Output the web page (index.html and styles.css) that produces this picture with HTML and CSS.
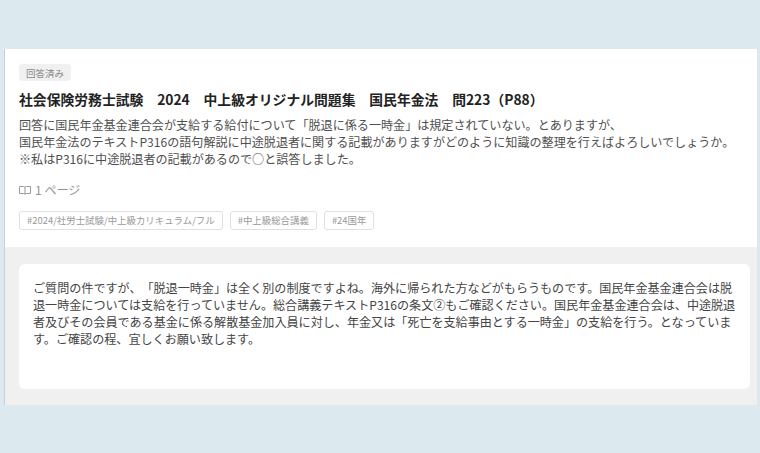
FILE: index.html
```html
<!DOCTYPE html>
<html lang="ja">
<head>
<meta charset="utf-8">
<title>質問</title>
<link rel="stylesheet" href="styles.css">
</head>
<body>
<main class="panel">
  <section class="question">
    <span class="status">回答済み</span>
    <h1 class="title">社会保険労務士試験　2024　中上級オリジナル問題集　国民年金法　問223（P88）</h1>
    <p class="body">回答に国民年金基金連合会が支給する給付について「脱退に係る一時金」は規定されていない。とありますが、<br>国民年金法のテキストP316の語句解説に中途脱退者に関する記載がありますがどのように知識の整理を行えばよろしいでしょうか。<br>※私はP316に中途脱退者の記載があるので○と誤答しました。</p>
    <div class="page">
      <svg class="book" width="12" height="10" viewBox="0 0 12 10" aria-hidden="true"><path d="M.5 1.500h4c.8 0 1.500.4 1.500 1 0-.6.7-1 1.500-1h4v7h-4c-.8 0-1.500.2-1.500.8 0-.6-.7-.8-1.500-.8h-4zM6 2.500v6.800" fill="none" stroke="#9a9a9a" stroke-width="1"/></svg>
      <span>1 ページ</span>
    </div>
    <ul class="tags">
      <li class="tag">#2024/社労士試験/中上級カリキュラム/フル</li>
      <li class="tag">#中上級総合講義</li>
      <li class="tag">#24国年</li>
    </ul>
  </section>
  <section class="answers">
    <div class="answer">ご質問の件ですが、「脱退一時金」は全く別の制度ですよね。海外に帰られた方などがもらうものです。国民年金基金連合会は脱退一時金については支給を行っていません。総合講義テキストP316の条文②もご確認ください。国民年金基金連合会は、中途脱退者及びその会員である基金に係る解散基金加入員に対し、年金又は「死亡を支給事由とする一時金」の支給を行う。となっています。ご確認の程、宜しくお願い致します。</div>
  </section>
</main>
</body>
</html>
```
FILE: styles.css
```css
* { box-sizing: border-box; }
html, body { height: 100%; }
body {
  margin: 0;
  padding: 49px 3px 48px 4px;
  background: #dce9ee;
  font-family: "Noto Sans CJK JP", "Noto Sans", sans-serif;
  color: #333;
  overflow: hidden;
  text-spacing-trim: space-all;
}
.panel {
  height: 356px;
  border-left: 1px solid #c9d0d3;
  background: #f0f0f0;
  display: flex;
  flex-direction: column;
}
.question {
  height: 198px;
  background: #fff;
  padding: 15px 14px 0;
}
.status {
  display: block;
  width: 52px;
  height: 17px;
  background: #f0f0f0;
  border-radius: 4px;
  color: #888;
  font-size: 9.500px;
  line-height: 18px;
  text-align: center;
}
.title {
  margin: 8px 0 0;
  font-size: 13.820px;
  font-weight: 700;
  line-height: 20px;
  color: #222;
  white-space: nowrap;
}
.body {
  margin: 7px 0 0;
  font-size: 12.080px;
  line-height: 17.100px;
  color: #4f4f4f;
}
.page {
  margin-top: 14px;
  display: flex;
  align-items: center;
  gap: 4px;
  font-size: 12.080px;
  line-height: 17px;
  color: #949494;
}
.book { display: block; }
.tags {
  list-style: none;
  margin: 13px 0 0;
  padding: 0;
  display: flex;
  gap: 7px;
}
.tag {
  height: 19px;
  padding: 0 7px;
  border: 1px solid #e0e0e0;
  border-radius: 3px;
  color: #999;
  font-size: 9.440px;
  line-height: 17px;
}
.answers {
  flex: 1;
  padding: 17px 7px 16px 14px;
}
.answer {
  height: 125px;
  background: #fff;
  border-radius: 6px;
  padding: 15px 14px;
  font-size: 12.080px;
  line-height: 17px;
  color: #444;
}
```
